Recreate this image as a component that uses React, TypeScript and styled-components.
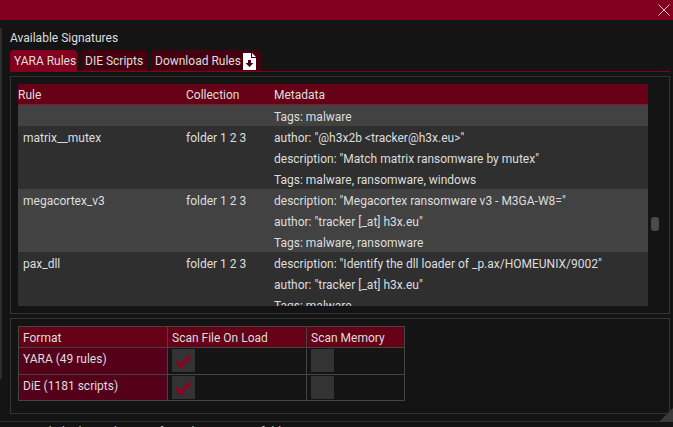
import React from 'react';
import styled, { createGlobalStyle } from 'styled-components';

const GlobalStyle = createGlobalStyle`
  html, body {
    margin: 0;
    padding: 0;
    background: #141414;
    overflow: hidden;
  }
  * {
    box-sizing: border-box;
  }
`;

const Page = styled.div`
  position: relative;
  width: 673px;
  height: 427px;
  overflow: hidden;
  background: #141414;
  color: #dedede;
  font-family: "Roboto", "Noto Sans", sans-serif;
  font-size: 12px;
  line-height: 16px;
`;

const TitleBar = styled.div`
  display: flex;
  justify-content: flex-end;
  align-items: center;
  height: 20px;
  padding-right: 3px;
  background: #82001d;
`;

const Body = styled.div`
  height: 402px;
  padding: 9px 3px 0 10px;
  border-bottom: 1px solid #2e2e2e;
`;

const EdgeBar = styled.div`
  position: absolute;
  left: 0;
  top: 28px;
  width: 2px;
  height: 351px;
  background: #2c2c2c;
`;

const Heading = styled.div`
  height: 21px;
  padding-top: 1px;
`;

const TabBar = styled.div`
  display: flex;
  gap: 4px;
  height: 22px;
  border-bottom: 1px solid #82001d;
`;

const Tab = styled.div<{ $active?: boolean; $width: number }>`
  display: flex;
  align-items: center;
  gap: 2px;
  width: ${props => props.$width}px;
  height: 21px;
  padding: 0 4px;
  border-radius: 4px 4px 0 0;
  white-space: nowrap;
  background: ${props => (props.$active ? '#82001d' : '#45000f')};
`;

const TabIcon = styled.svg`
  margin-top: 2px;
  flex: none;
`;

const Panel = styled.div<{ $height: number }>`
  height: ${props => props.$height}px;
  padding: 7px 21px 7px 7px;
  border: 1px solid #333333;
  overflow: hidden;
`;

const RulesPanel = styled(Panel)`
  position: relative;
  margin-top: 4px;
`;

const FormatPanel = styled(Panel)`
  margin-top: 4px;
`;

const RulesClip = styled.div`
  height: 222px;
  overflow: hidden;
  background: #303030;
`;

const RulesHead = styled.div`
  display: grid;
  grid-template-columns: 168px 88px 1fr;
  height: 21px;
  padding-top: 2px;
  align-items: center;
  background: #650016;
  border-bottom: 1px solid #7f1a30;
`;

const HeadCell = styled.div`
  white-space: nowrap;
`;

const RulesRow = styled.div<{ $light: boolean; $height: number }>`
  display: grid;
  grid-template-columns: 168px 88px 1fr;
  height: ${props => props.$height}px;
  padding-top: 4px;
  background: ${props => (props.$light ? '#424242' : '#2f2f2f')};
`;

const NameCell = styled.div`
  padding-left: 5px;
`;

const CollectionCell = styled.div``;

const MetaCell = styled.div``;

const MetaLine = styled.div`
  height: 21px;
`;

const ScrollThumb = styled.div`
  position: absolute;
  left: 640px;
  top: 140px;
  width: 8px;
  height: 14px;
  border-radius: 3px;
  background: #4a4a4a;
`;

const FormatTable = styled.div`
  display: grid;
  grid-template-columns: 149px 139px 98px;
  grid-template-rows: 21px 27px 26px;
  width: 387px;
  border-top: 1px solid #444444;
  border-left: 1px solid #444444;
`;

const Cell = styled.div<{ $tone?: 'head' | 'label' }>`
  display: flex;
  align-items: ${props => (props.$tone === 'head' ? 'center' : 'flex-start')};
  padding: ${props => (props.$tone === 'label' ? '3px 0 0 4px' : props.$tone === 'head' ? '2px 0 0 4px' : '1px 0 0 4px')};
  border-right: 1px solid #444444;
  border-bottom: 1px solid #444444;
  background: ${props => (props.$tone === 'head' ? '#650016' : props.$tone === 'label' ? '#55001a' : 'transparent')};
`;

const Check = styled.div`
  display: flex;
  align-items: center;
  justify-content: center;
  width: 23px;
  height: 23px;
  background: #333333;
`;

const Grip = styled.div`
  position: absolute;
  right: 0;
  top: 408px;
  width: 14px;
  height: 14px;
  background: #3a3a3a;
  clip-path: polygon(100% 0, 100% 100%, 0 100%);
`;

const StatusText = styled.div`
  position: absolute;
  left: 25px;
  top: 424px;
  color: #bdbdbd;
  white-space: nowrap;
`;

const CloseIcon = () => (
  <svg width="12" height="12" viewBox="0 0 12 12">
    <path d="M0.5 0.5L11.5 11.5M11.5 0.5L0.5 11.5" stroke="#ffffff" strokeWidth="0.8" fill="none" />
  </svg>
);

const FileDownIcon = () => (
  <TabIcon width="13" height="17" viewBox="0 0 13 17">
    <path d="M0 0H8V5H13V17H0Z" fill="#ffffff" />
    <path d="M9 0L13 4H9Z" fill="#ffffff" />
    <path d="M5 7H8V10H10.5L6.5 14L2.5 10H5Z" fill="#45000f" />
  </TabIcon>
);

const CheckMark = () => (
  <svg width="17" height="14" viewBox="0 0 17 14">
    <path d="M1.5 7.5L6 12L15.5 2" stroke="#8f0022" strokeWidth="3.4" fill="none" />
  </svg>
);

const rules = [
  { name: '', collection: '', height: 21, meta: ['Tags: malware'] },
  {
    name: 'matrix__mutex',
    collection: 'folder 1 2 3',
    height: 63,
    meta: ['author: "@h3x2b <tracker@h3x.eu>"', 'description: "Match matrix ransomware by mutex"', 'Tags: malware, ransomware, windows'],
  },
  {
    name: 'megacortex_v3',
    collection: 'folder 1 2 3',
    height: 63,
    meta: ['description: "Megacortex ransomware v3 - M3GA-W8="', 'author: "tracker [_at] h3x.eu"', 'Tags: malware, ransomware'],
  },
  {
    name: 'pax_dll',
    collection: 'folder 1 2 3',
    height: 63,
    meta: ['description: "Identify the dll loader of _p.ax/HOMEUNIX/9002"', 'author: "tracker [_at] h3x.eu"', 'Tags: malware'],
  },
];

const formats = ['YARA (49 rules)', 'DiE (1181 scripts)'];

const App = () => (
  <Page>
    <GlobalStyle />
    <TitleBar>
      <CloseIcon />
    </TitleBar>
    <EdgeBar />
    <Body>
      <Heading>Available Signatures</Heading>
      <TabBar>
        <Tab $active $width={67}>YARA Rules</Tab>
        <Tab $width={66}>DIE Scripts</Tab>
        <Tab $width={110}>
          Download Rules
          <FileDownIcon />
        </Tab>
      </TabBar>
      <RulesPanel $height={238}>
        <RulesClip>
          <RulesHead>
            <HeadCell>Rule</HeadCell>
            <HeadCell>Collection</HeadCell>
            <HeadCell>Metadata</HeadCell>
          </RulesHead>
          {rules.map((rule, i) => (
            <RulesRow key={i} $light={i % 2 === 0} $height={rule.height}>
              <NameCell>{rule.name}</NameCell>
              <CollectionCell>{rule.collection}</CollectionCell>
              <MetaCell>
                {rule.meta.map(line => (
                  <MetaLine key={line}>{line}</MetaLine>
                ))}
              </MetaCell>
            </RulesRow>
          ))}
        </RulesClip>
        <ScrollThumb />
      </RulesPanel>
      <FormatPanel $height={96}>
        <FormatTable>
          <Cell $tone="head">Format</Cell>
          <Cell $tone="head">Scan File On Load</Cell>
          <Cell $tone="head">Scan Memory</Cell>
          {formats.map(format => (
            <React.Fragment key={format}>
              <Cell $tone="label">{format}</Cell>
              <Cell>
                <Check>
                  <CheckMark />
                </Check>
              </Cell>
              <Cell>
                <Check />
              </Cell>
            </React.Fragment>
          ))}
        </FormatTable>
      </FormatPanel>
    </Body>
    <Grip />
    <StatusText>Loaded rules and scripts from the signature folders</StatusText>
  </Page>
);

export default App;
